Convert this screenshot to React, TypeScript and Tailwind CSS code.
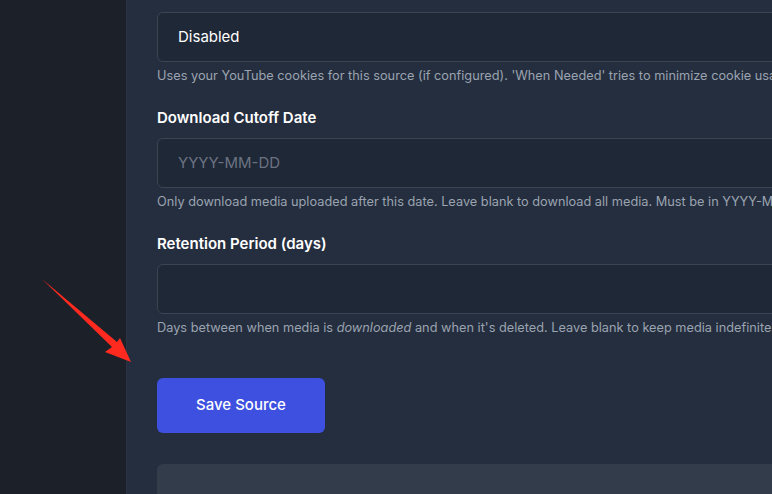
const font = { fontFamily: "Inter, 'Noto Sans', sans-serif" };

function Field({
  label,
  value,
  placeholder,
  help,
}: {
  label?: string;
  value?: string;
  placeholder?: string;
  help: React.ReactNode;
}) {
  return (
    <div className="flex shrink-0 flex-col">
      {label && (
        <label className="mb-2 text-[15px] leading-6 font-semibold text-white">
          {label}
        </label>
      )}
      <div className="flex h-[50px] w-[900px] items-center rounded-md border border-[#3a4453] bg-[#1f2837] px-5 text-[15px]">
        {value ? (
          <span className="text-white">{value}</span>
        ) : (
          <span className="text-[#6b7382]">{placeholder}</span>
        )}
      </div>
      <p className="mt-1 whitespace-nowrap text-[12.75px] leading-5 text-[#9aa3b0]">
        {help}
      </p>
    </div>
  );
}

export default function App() {
  return (
    <div
      className="relative flex h-[494px] w-[772px] overflow-hidden bg-[#252e3e]"
      style={font}
    >
      <aside className="w-[127px] shrink-0 border-r border-[#2b3443] bg-[#1c2129]" />
      <main className="flex min-w-0 flex-1 flex-col overflow-hidden pl-[30px] pt-[12px]">
        <div className="flex shrink-0 flex-col gap-5">
          <Field
            value="Disabled"
            help="Uses your YouTube cookies for this source (if configured). 'When Needed' tries to minimize cookie usage."
          />
          <Field
            label="Download Cutoff Date"
            placeholder="YYYY-MM-DD"
            help="Only download media uploaded after this date. Leave blank to download all media. Must be in YYYY-MM-DD format."
          />
          <Field
            label="Retention Period (days)"
            help={
              <>
                Days between when media is <em>downloaded</em> and when it's
                deleted. Leave blank to keep media indefinitely.
              </>
            }
          />
        </div>
        <button
          type="button"
          className="mt-10 h-[55px] w-[168px] shrink-0 rounded-md bg-[#3d50e0] text-[15px] font-medium text-white"
        >
          Save Source
        </button>
        <div className="mt-[31px] h-[60px] w-[900px] shrink-0 rounded-t-md bg-[#323c4b]" />
      </main>

      {/* annotation arrow */}
      <svg
        className="pointer-events-none absolute left-0 top-0"
        width="772"
        height="494"
        viewBox="0 0 772 494"
      >
        <polygon
          points="42,279 117,342 120,338 131,362 105,352 112,347"
          fill="#ff2a1f"
        />
      </svg>
    </div>
  );
}
